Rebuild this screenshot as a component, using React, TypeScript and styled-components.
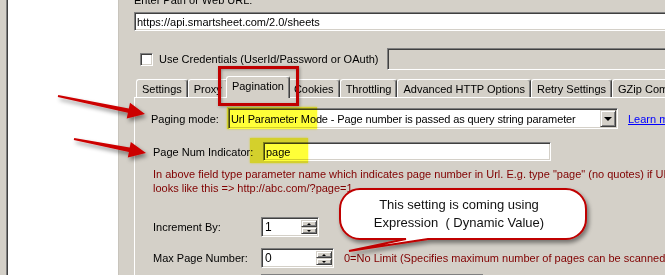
import React from 'react';
import styled, { createGlobalStyle, css } from 'styled-components';

const GlobalStyle = createGlobalStyle`
  html, body { margin: 0; padding: 0; }
  body {
    background: #d4d0c8;
    font-family: "Liberation Sans", Arial, sans-serif;
    font-size: 11px;
    color: #000;
  }
  * { box-sizing: border-box; }
`;

const sunken = css`
  border: 1px solid;
  border-color: #808080 #ffffff #ffffff #808080;
  box-shadow: inset 1px 1px 0 #404040, inset -1px -1px 0 #d4d0c8;
`;

const raised = css`
  border: 1px solid;
  border-color: #d4d0c8 #404040 #404040 #d4d0c8;
  box-shadow: inset 1px 1px 0 #ffffff, inset -1px -1px 0 #808080;
  background: #d4d0c8;
`;

const Frame = styled.div`
  position: relative;
  display: flex;
  width: 665px;
  height: 275px;
  overflow: hidden;
  background: #d4d0c8;
`;

const Gutter = styled.div`
  width: 6px;
  flex: none;
`;

const Sidebar = styled.div`
  flex: none;
  width: 113px;
  background: #fff;
  border-left: 1px solid #808080;
  border-right: 1px solid #c8c4bc;
  box-shadow: inset 1px 0 0 #404040;
`;

const Main = styled.div`
  flex: 1;
  min-width: 0;
  display: flex;
  flex-direction: column;
  padding-left: 15px;
  overflow: hidden;
`;

const PathLabel = styled.div`
  margin-top: -6px;
  height: 13px;
  line-height: 13px;
  white-space: nowrap;
`;

const TextBox = styled.div<{ $width: number; $height: number; $disabled?: boolean }>`
  ${sunken};
  flex: none;
  width: ${({ $width }) => $width}px;
  height: ${({ $height }) => $height}px;
  background: ${({ $disabled }) => ($disabled ? '#d4d0c8' : '#fff')};
  padding-left: 2px;
  display: flex;
  align-items: center;
  white-space: nowrap;
  overflow: hidden;
`;

const UrlBox = styled(TextBox)`
  margin-top: 5px;
`;

const CheckRow = styled.div`
  margin-top: 17px;
  display: flex;
  align-items: center;
  padding-left: 6px;
  height: 22px;
`;

const CheckBox = styled.span`
  ${sunken};
  width: 13px;
  height: 13px;
  background: #fff;
  margin-right: 6px;
  flex: none;
`;

const CheckLabel = styled.span`
  width: 228px;
  flex: none;
  white-space: nowrap;
`;

const TabStrip = styled.div`
  margin-top: 6px;
  height: 21px;
  display: flex;
  align-items: flex-end;
  padding-left: 2px;
  position: relative;
  z-index: 1;
`;

const Tab = styled.div<{ $active?: boolean }>`
  flex: none;
  height: ${({ $active }) => ($active ? 22 : 18)}px;
  padding: 0 5px ${({ $active }) => ($active ? 3 : 0)}px;
  margin: 0 ${({ $active }) => ($active ? -2 : 0)}px ${({ $active }) => ($active ? -1 : 0)}px;
  border-top: 1px solid #fff;
  border-left: 1px solid #fff;
  border-right: 1px solid #404040;
  box-shadow: inset -1px 0 0 #808080;
  border-radius: 3px 3px 0 0;
  background: #d4d0c8;
  display: flex;
  align-items: center;
  white-space: nowrap;
  position: relative;
  z-index: ${({ $active }) => ($active ? 2 : 1)};
`;

const TabPanel = styled.div`
  flex: 1;
  border-top: 1px solid #fff;
  border-left: 1px solid #fff;
  display: flex;
  flex-direction: column;
`;

const FieldRow = styled.div<{ $top: number; $indent: number; $labelWidth: number; $height: number }>`
  display: flex;
  align-items: center;
  margin-top: ${({ $top }) => $top}px;
  padding-left: ${({ $indent }) => $indent}px;
  height: ${({ $height }) => $height}px;
  white-space: nowrap;

  & > label {
    flex: none;
    width: ${({ $labelWidth }) => $labelWidth}px;
  }
`;

const Control = styled.div`
  position: relative;
  flex: none;
  display: flex;
`;

const Highlight = styled.span<{ $x: number; $y: number; $w: number; $h: number }>`
  position: absolute;
  left: ${({ $x }) => $x}px;
  top: ${({ $y }) => $y}px;
  width: ${({ $w }) => $w}px;
  height: ${({ $h }) => $h}px;
  background: #ffff38;
  mix-blend-mode: multiply;
  box-shadow: 0 0 2px #ffff38;
  pointer-events: none;
`;

const Select = styled.div`
  ${sunken};
  width: 390px;
  height: 21px;
  padding: 1px;
  background: #fff;
  display: flex;
  align-items: stretch;
`;

const SelectText = styled.span`
  flex: 1;
  padding-left: 1px;
  display: flex;
  align-items: center;
  overflow: hidden;
  letter-spacing: -0.12px;
`;

const DropButton = styled.span`
  ${raised};
  width: 16px;
  flex: none;
  display: flex;
  align-items: center;
  justify-content: center;

  &::after {
    content: '';
    border-left: 4px solid transparent;
    border-right: 4px solid transparent;
    border-top: 4px solid #000;
    margin-top: 1px;
  }
`;

const Link = styled.a`
  margin-left: 10px;
  color: #0000ff;
  text-decoration: underline;
`;

const Hint = styled.div`
  margin-top: 6px;
  padding-left: 18px;
  line-height: 14px;
  color: #800000;
  white-space: nowrap;
`;

const Spin = styled.div<{ $width: number }>`
  ${sunken};
  flex: none;
  width: ${({ $width }) => $width}px;
  height: 20px;
  padding: 2px 1px 2px 2px;
  background: #fff;
  display: flex;
  align-items: stretch;
`;

const SpinValue = styled.span`
  flex: 1;
  display: flex;
  align-items: center;
  padding-left: 1px;
  font-size: 12px;
`;

const SpinButtons = styled.span`
  width: 16px;
  flex: none;
  display: flex;
  flex-direction: column;
`;

const SpinButton = styled.span<{ $down?: boolean }>`
  ${raised};
  flex: 1;
  display: flex;
  align-items: center;
  justify-content: center;

  &::after {
    content: '';
    border-left: 2px solid transparent;
    border-right: 2px solid transparent;
    ${({ $down }) => ($down ? 'border-top: 2px solid #000;' : 'border-bottom: 2px solid #000;')}
  }
`;

const Note = styled.span`
  margin-left: 10px;
  color: #800000;
`;

const NextField = styled.div`
  margin-top: 6px;
  margin-left: 126px;
  width: 222px;
  height: 2px;
  border-top: 1px solid #808080;
  background: #404040;
`;

const Overlay = styled.svg`
  position: absolute;
  left: 0;
  top: 0;
  pointer-events: none;
  z-index: 5;
`;

const RedBox = styled.div`
  position: absolute;
  left: 218px;
  top: 66px;
  width: 81px;
  height: 40px;
  border: 3px solid #c00000;
  box-shadow: inset 1px 1px 3px rgba(0, 0, 0, 0.3), 1px 1px 3px rgba(0, 0, 0, 0.3);
  z-index: 6;
  pointer-events: none;
`;

const CalloutText = styled.div`
  position: absolute;
  left: 340px;
  top: 189px;
  width: 246px;
  padding: 7px 8px 0 0;
  font-family: Arial, "Liberation Sans", sans-serif;
  font-size: 13px;
  line-height: 18px;
  color: #111;
  text-align: center;
  white-space: pre;
  z-index: 7;
`;

function arrowShape(x1: number, y1: number, x2: number, y2: number) {
  const dx = x2 - x1;
  const dy = y2 - y1;
  const len = Math.hypot(dx, dy);
  const ux = dx / len;
  const uy = dy / len;
  const nx = -uy;
  const ny = ux;
  const head = 17;
  const nxk = x2 - ux * head;
  const nyk = y2 - uy * head;
  const pts = [
    [x1 + nx * 1, y1 + ny * 1],
    [nxk + nx * 2.2, nyk + ny * 2.2],
    [nxk + nx * 8, nyk + ny * 8],
    [x2, y2],
    [nxk - nx * 8, nyk - ny * 8],
    [nxk - nx * 2.2, nyk - ny * 2.2],
    [x1 - nx * 1, y1 - ny * 1],
  ];
  return pts.map(([a, b]) => `${a.toFixed(1)},${b.toFixed(1)}`).join(' ');
}

const bubble = (() => {
  const x0 = 340;
  const y0 = 189;
  const x1 = 586;
  const y1 = 239;
  const r = 20;
  return `M ${x0 + r} ${y0} H ${x1 - r} A ${r} ${r} 0 0 1 ${x1} ${y0 + r} V ${y1 - r} A ${r} ${r} 0 0 1 ${x1 - r} ${y1} H 428 L 349 251 L 406 ${y1} H ${x0 + r} A ${r} ${r} 0 0 1 ${x0} ${y1 - r} V ${y0 + r} A ${r} ${r} 0 0 1 ${x0 + r} ${y0} Z`;
})();

const tabs = ['Settings', 'Proxy', 'Pagination', 'Cookies', 'Throttling', 'Advanced HTTP Options', 'Retry Settings', 'GZip Compression'];

export default function App() {
  return (
    <>
      <GlobalStyle />
      <Frame>
        <Gutter />
        <Sidebar />
        <Main>
          <PathLabel>Enter Path or Web URL:</PathLabel>
          <UrlBox $width={560} $height={19}>https://api.smartsheet.com/2.0/sheets</UrlBox>
          <CheckRow>
            <CheckBox />
            <CheckLabel>Use Credentials (UserId/Password or OAuth)</CheckLabel>
            <TextBox $width={300} $height={22} $disabled />
          </CheckRow>
          <TabStrip>
            {tabs.map((t) => (
              <Tab key={t} $active={t === 'Pagination'}>
                {t}
              </Tab>
            ))}
          </TabStrip>
          <TabPanel>
            <FieldRow $top={10} $indent={16} $labelWidth={77} $height={21}>
              <label>Paging mode:</label>
              <Control>
                <Select>
                  <SelectText>Url Parameter Mode - Page number is passed as query string parameter</SelectText>
                  <DropButton />
                </Select>
                <Highlight $x={-1} $y={-1} $w={90} $h={22} />
              </Control>
              <Link>Learn more</Link>
            </FieldRow>
            <FieldRow $top={13} $indent={18} $labelWidth={110} $height={19}>
              <label>Page Num Indicator:</label>
              <Control>
                <TextBox $width={288} $height={19}>page</TextBox>
                <Highlight $x={-13} $y={-4} $w={58} $h={25} />
              </Control>
            </FieldRow>
            <Hint>
              In above field type parameter name which indicates page number in Url. E.g. type "page" (no quotes) if URL
              <br />
              looks like this =&gt; http://abc.com/?page=1
            </Hint>
            <FieldRow $top={22} $indent={18} $labelWidth={108} $height={20}>
              <label>Increment By:</label>
              <Spin $width={58}>
                <SpinValue>1</SpinValue>
                <SpinButtons>
                  <SpinButton />
                  <SpinButton $down />
                </SpinButtons>
              </Spin>
            </FieldRow>
            <FieldRow $top={11} $indent={18} $labelWidth={108} $height={20}>
              <label>Max Page Number:</label>
              <Spin $width={73}>
                <SpinValue>0</SpinValue>
                <SpinButtons>
                  <SpinButton />
                  <SpinButton $down />
                </SpinButtons>
              </Spin>
              <Note>0=No Limit (Specifies maximum number of pages can be scanned until all pages are read)</Note>
            </FieldRow>
            <NextField />
          </TabPanel>
        </Main>

        <Overlay width={665} height={275} viewBox="0 0 665 275">
          <defs>
            <filter id="shadow" x="-20%" y="-40%" width="150%" height="200%">
              <feDropShadow dx="2" dy="3" stdDeviation="2" floodColor="#000" floodOpacity="0.45" />
            </filter>
          </defs>
          <g fill="#cc0000" filter="url(#shadow)">
            <polygon points={arrowShape(58, 96, 145, 114)} />
            <polygon points={arrowShape(74, 139, 146, 153)} />
          </g>
          <path d={bubble} fill="#fff" stroke="#c00000" strokeWidth={2} filter="url(#shadow)" />
        </Overlay>
        <RedBox />
        <CalloutText>{'This setting is coming using\nExpression  ( Dynamic Value)'}</CalloutText>
      </Frame>
    </>
  );
}
